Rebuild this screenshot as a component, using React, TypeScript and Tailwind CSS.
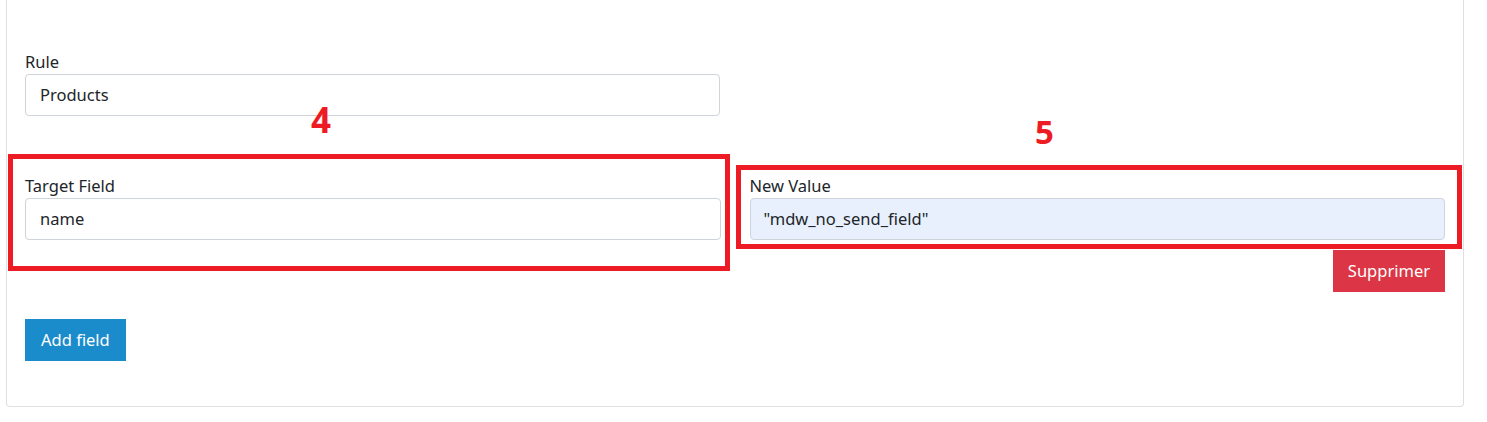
export default function App() {
  const font = { fontFamily: '"Segoe UI", "Noto Sans", "Open Sans", sans-serif' };
  return (
    <div className="relative h-[422px] w-[1487px] overflow-hidden bg-white text-[16.5px] text-[#212529]" style={font}>
      <div className="ml-[6px] w-[1458px] rounded-b-[4px] border-x border-b border-[#dfdfdf] px-[18px] pt-[50px] pb-[45px]">
        <div className="w-[695px]">
          <label className="block leading-6">Rule</label>
          <div className="flex h-[42px] items-center rounded-[4px] border border-[#ced4da] pl-[14px]">Products</div>
        </div>

        <div className="mt-[58px] grid grid-cols-2 gap-x-[29px]">
          <div>
            <label className="block leading-6">Target Field</label>
            <div className="flex h-[42px] items-center rounded-[4px] border border-[#ced4da] pl-[14px]">name</div>
          </div>
          <div>
            <label className="block leading-6">New Value</label>
            <div className="flex h-[42px] items-center rounded-[4px] border border-[#ced4da] bg-[#e8f0fe] pl-[13px]">
              "mdw_no_send_field"
            </div>
            <div className="mt-[10px] flex justify-end">
              <button className="h-[42px] bg-[#dc3545] px-[15px] text-white">Supprimer</button>
            </div>
          </div>
        </div>

        <button className="mt-[27px] h-[42px] bg-[#1a8bcb] px-[16px] text-white">Add field</button>
      </div>

      {/* annotations */}
      <div className="absolute left-[8px] top-[154px] h-[117px] w-[722px] border-[5px] border-[#ed1c24]" />
      <div className="absolute left-[736px] top-[165px] h-[84px] w-[726px] border-[5px] border-[#ed1c24]" />
      <span className="absolute left-[311px] top-[98px] text-[35px] font-bold leading-[44px] text-[#ed1c24]">4</span>
      <span className="absolute left-[1035px] top-[110px] text-[33px] font-bold leading-[44px] text-[#ed1c24]">5</span>
    </div>
  );
}
